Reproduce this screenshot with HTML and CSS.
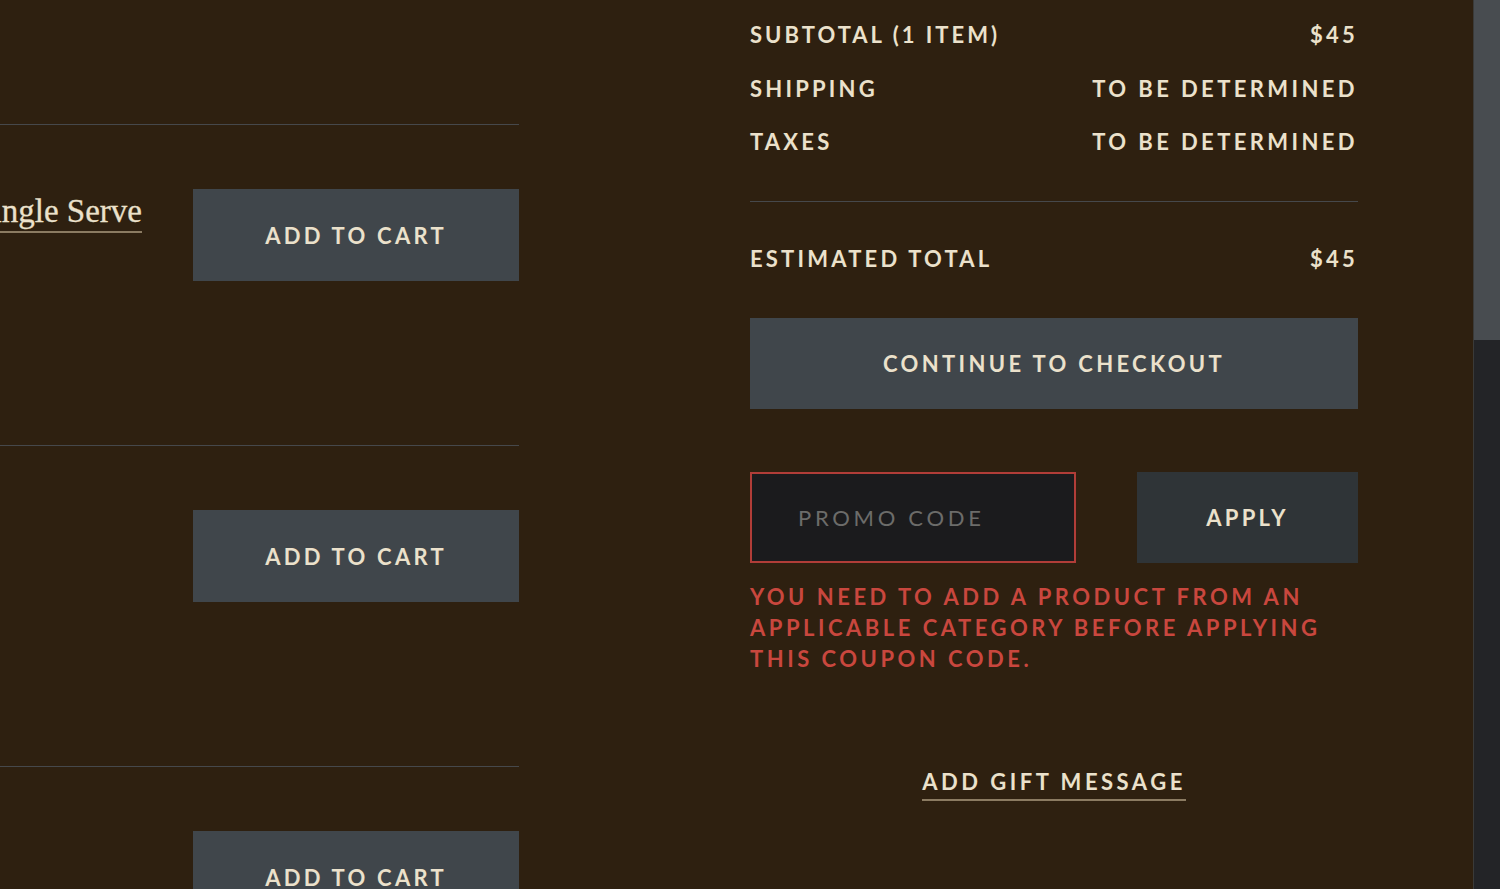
FILE: index.html
```html
<!DOCTYPE html>
<html lang="en">
<head>
<meta charset="utf-8">
<title>Cart</title>
<link rel="stylesheet" href="styles.css">
</head>
<body>
<div class="page">
  <main class="main">
    <section class="items">
      <div class="item">
        <div class="item-title"><a class="title-link" href="#">Pour Over Single Serve</a></div>
        <button class="btn add-btn">ADD TO CART</button>
      </div>
      <div class="item">
        <div class="item-title"></div>
        <button class="btn add-btn">ADD TO CART</button>
      </div>
      <div class="item">
        <div class="item-title"></div>
        <button class="btn add-btn">ADD TO CART</button>
      </div>
    </section>
    <aside class="summary">
      <div class="rows">
        <div class="row"><span class="wide">SUBTOTAL (1 ITEM)</span><span>$45</span></div>
        <div class="row"><span>SHIPPING</span><span class="wider">TO BE DETERMINED</span></div>
        <div class="row"><span>TAXES</span><span class="wider">TO BE DETERMINED</span></div>
      </div>
      <div class="total row"><span>ESTIMATED TOTAL</span><span>$45</span></div>
      <button class="btn checkout">CONTINUE TO CHECKOUT</button>
      <div class="promo">
        <input class="promo-input" type="text" placeholder="PROMO CODE">
        <button class="btn apply">APPLY</button>
      </div>
      <p class="error">YOU NEED TO ADD A PRODUCT FROM AN<br>APPLICABLE CATEGORY BEFORE APPLYING<br>THIS COUPON CODE.</p>
      <div class="gift"><a href="#" class="gift-link">ADD GIFT MESSAGE</a></div>
    </aside>
  </main>
  <div class="scrollbar"><div class="thumb"></div></div>
</div>
</body>
</html>
```
FILE: styles.css
```css
* { box-sizing: border-box; }
html, body {
  margin: 0;
  height: 100%;
  overflow: hidden;
}
body {
  background: #2e2010;
  color: #ebe1cb;
  font-family: "Lato", "DejaVu Sans", sans-serif;
}
.page {
  display: flex;
  height: 889px;
}
.main {
  flex: 1;
  display: flex;
  align-items: flex-start;
  overflow: hidden;
}
.items {
  width: 519px;
  padding-top: 124px;
  flex: none;
}
.item {
  height: 321px;
  border-top: 1px solid #46484b;
  padding-top: 64px;
  display: flex;
  gap: 51px;
  align-items: flex-start;
}
.item-title {
  width: 142px;
  display: flex;
  justify-content: flex-end;
  white-space: nowrap;
  padding-top: 5px;
}
.title-link {
  display: block;
  font-family: "Liberation Serif", "DejaVu Serif", serif;
  font-size: 33px;
  line-height: 34px;
  padding-bottom: 3px;
  color: #ebe1cb;
  text-decoration: none;
  border-bottom: 2px solid #8b7b62;
  -webkit-text-stroke: 0.3px #ebe1cb;
}
.btn {
  border: none;
  background: #40464b;
  color: #ebe1cb;
  font-family: "Lato", "DejaVu Sans", sans-serif;
  font-weight: 700;
  font-size: 22px;
  letter-spacing: 3.25px;
  padding: 0;
  cursor: pointer;
}
.add-btn {
  width: 326px;
  height: 92px;
}
.summary {
  margin-left: 231px;
  width: 608px;
  flex: none;
  padding-top: 8px;
  font-size: 22px;
  font-weight: 700;
  letter-spacing: 3.2px;
}
.wide { letter-spacing: 3px; }
.wider { letter-spacing: 3.4px; }
.row {
  display: flex;
  justify-content: space-between;
  align-items: center;
  height: 53.5px;
}
.rows {
  padding-bottom: 32px;
  border-bottom: 1px solid #46484b;
}
.total {
  margin-top: 30px;
  height: 54px;
}
.checkout {
  display: block;
  width: 608px;
  height: 91px;
  margin-top: 32px;
  letter-spacing: 3.35px;
}
.promo {
  display: flex;
  justify-content: space-between;
  margin-top: 63px;
}
.promo-input {
  width: 326px;
  height: 91px;
  background: #1b1b1d;
  border: 2px solid #b13d38;
  padding: 0 0 0 46px;
  color: #ebe1cb;
  font-family: "Lato", "DejaVu Sans", sans-serif;
  font-size: 22px;
  font-weight: 400;
  letter-spacing: 3.7px;
  outline: none;
}
.promo-input::placeholder {
  color: #6c6c6a;
}
.apply {
  width: 221px;
  height: 91px;
  background: #2f3437;
}
.error {
  margin: 18px 0 0;
  color: #c9473e;
  font-size: 22px;
  font-weight: 700;
  line-height: 31px;
  letter-spacing: 3.5px;
}
.gift {
  text-align: center;
  margin-top: 94px;
}
.gift-link {
  color: #ebe1cb;
  text-decoration: none;
  border-bottom: 2px solid #8b7b62;
  padding-bottom: 4px;
  letter-spacing: 3.5px;
}
.scrollbar {
  width: 27px;
  flex: none;
  background: #232427;
  border-left: 1px solid #3a3a38;
}
.thumb {
  height: 340px;
  background: #484c50;
}
```
